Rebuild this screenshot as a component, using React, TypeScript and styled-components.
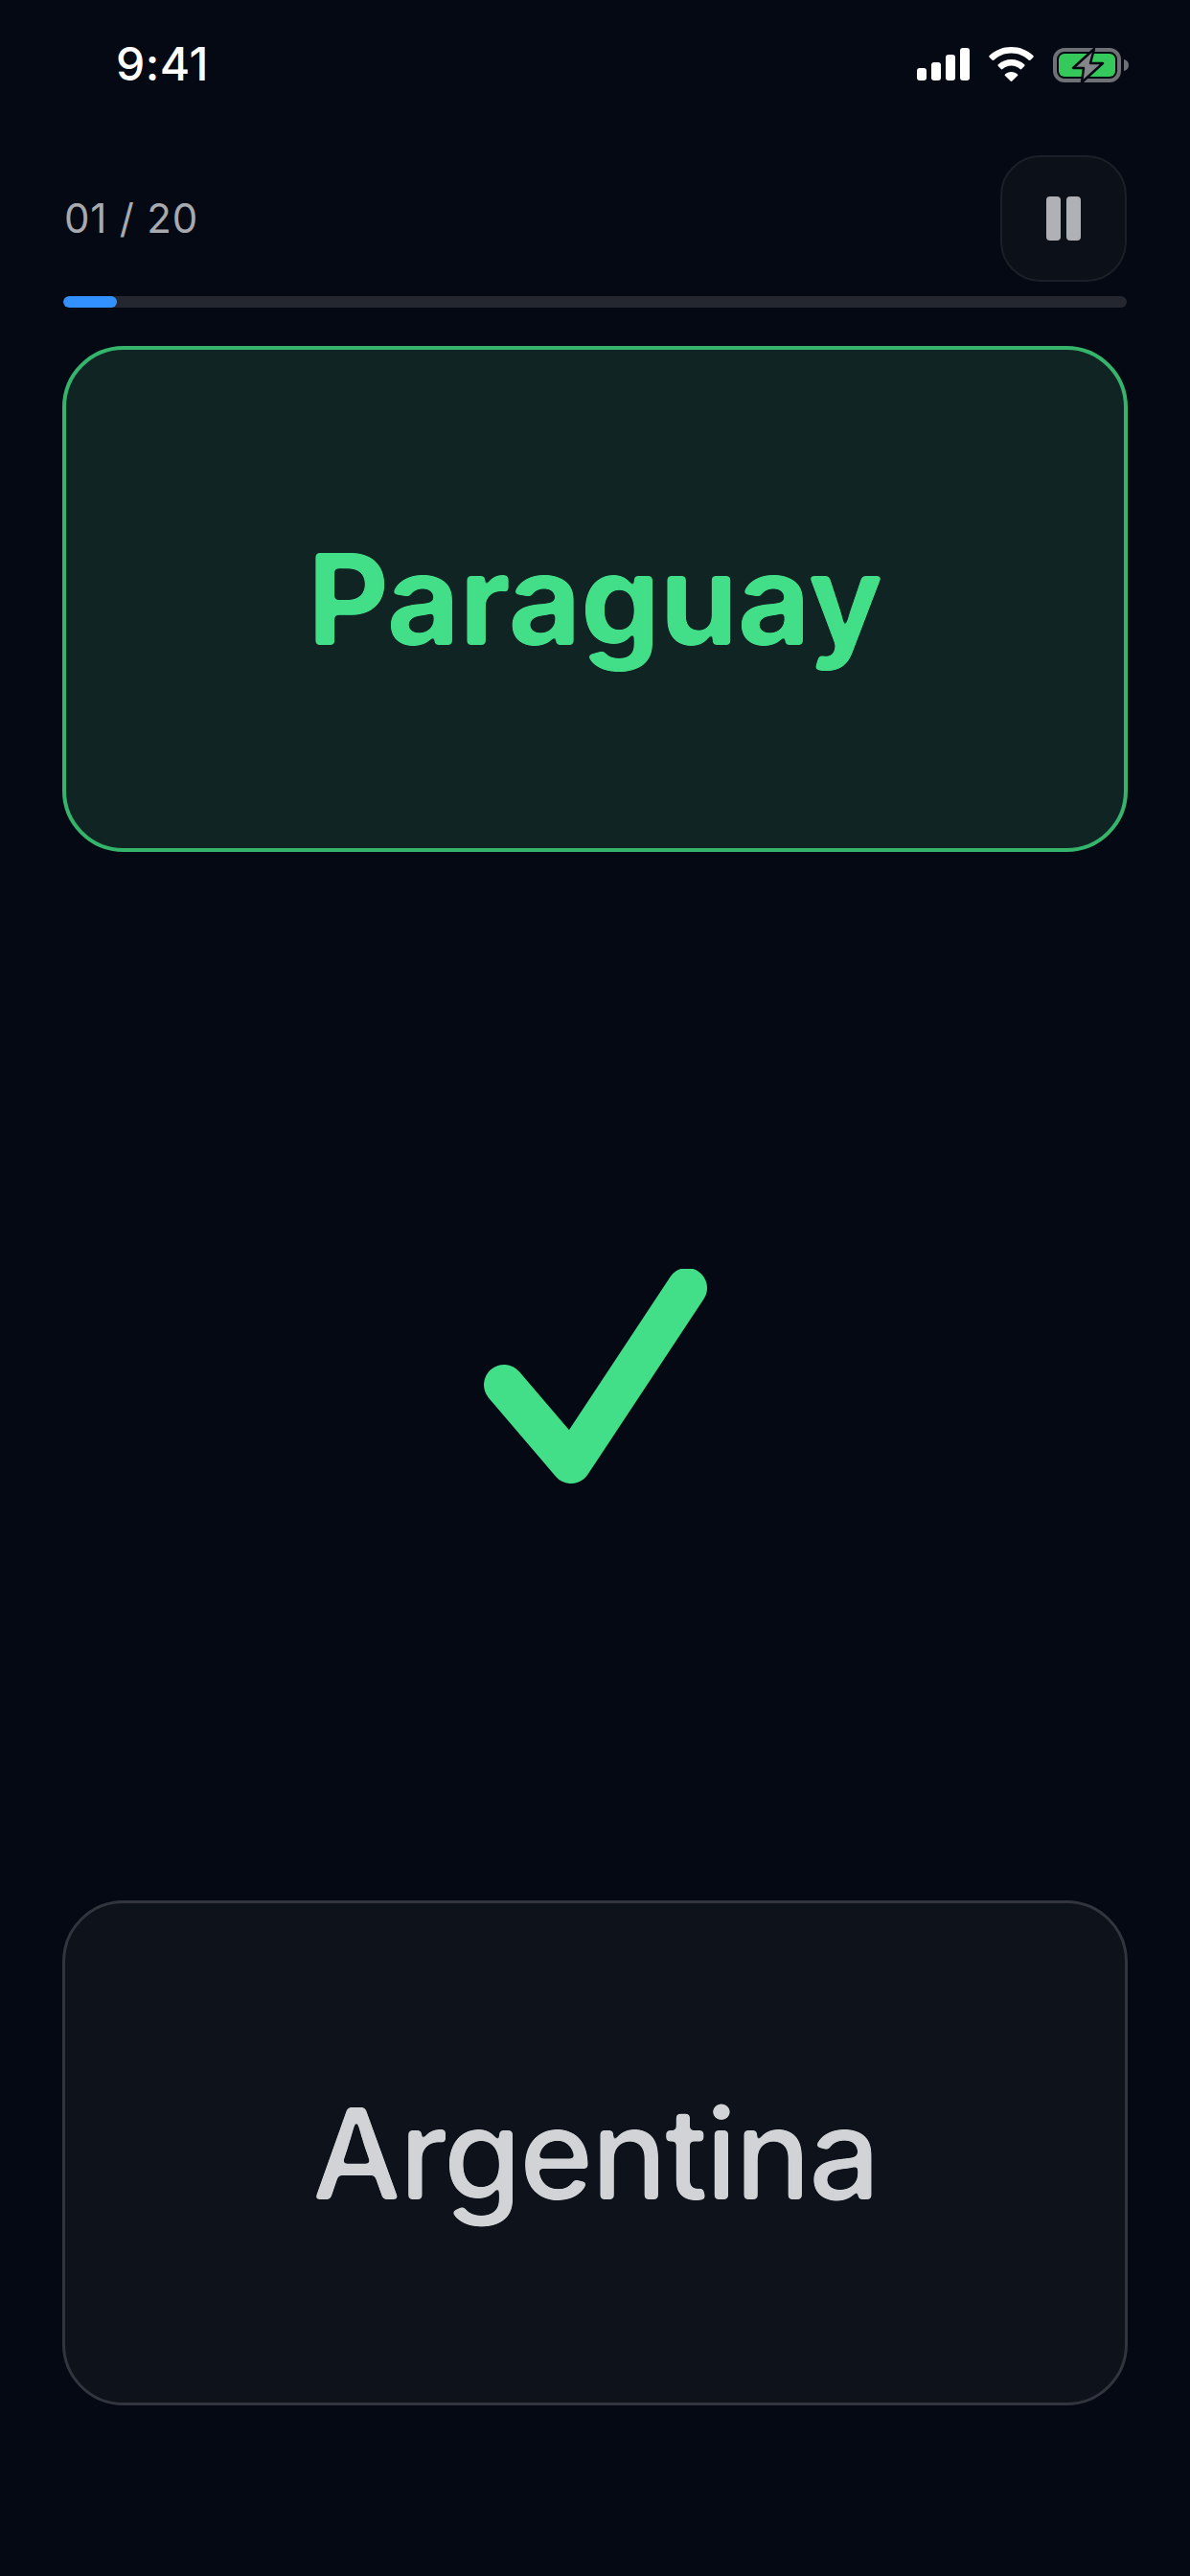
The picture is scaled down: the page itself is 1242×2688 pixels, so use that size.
import { FC } from "react";
import styled, { createGlobalStyle } from "styled-components";

const GlobalStyle = createGlobalStyle`
  html, body {
    margin: 0;
    padding: 0;
    background: #040913;
  }
`;

const Page = styled.div`
  width: 1242px;
  height: 2688px;
  box-sizing: border-box;
  padding: 0 66px 178px;
  display: flex;
  flex-direction: column;
  background: #040913;
  font-family: Inter, "Liberation Sans", sans-serif;
  overflow: hidden;
`;

// the reference font has rounded stroke ends, this blur + threshold filter softens the corners
const FilterDefs = styled.svg`
  position: absolute;
  width: 0;
  height: 0;
`;

const StatusBar = styled.div`
  height: 162px;
  flex-shrink: 0;
  box-sizing: border-box;
  padding: 43px 0 0 55px;
  display: flex;
  justify-content: space-between;
  align-items: flex-start;
`;

const Clock = styled.span`
  font-size: 48px;
  line-height: 48px;
  font-weight: 500;
  letter-spacing: 0.5px;
  color: #ffffff;
`;

const StatusIcons = styled.div`
  display: flex;
  align-items: flex-start;
  gap: 20px;
  margin-top: 6px;
  margin-right: -2px;
`;

const Header = styled.div`
  height: 132px;
  flex-shrink: 0;
  display: flex;
  align-items: center;
  justify-content: space-between;
`;

const Counter = styled.span`
  font-size: 42px;
  line-height: 50px;
  letter-spacing: 0.8px;
  color: #a8a9ae;
  padding-left: 1px;
`;

const PauseButton = styled.button`
  width: 132px;
  height: 132px;
  padding: 0;
  box-sizing: border-box;
  border: 2px solid #1c1f27;
  border-radius: 42px;
  background: #0c1018;
  display: flex;
  align-items: center;
  justify-content: center;
  gap: 6px;
`;

const PauseBar = styled.span`
  width: 15px;
  height: 46px;
  border-radius: 4px;
  background: #b0b1b6;
`;

const Track = styled.div`
  height: 12px;
  margin-top: 15px;
  flex-shrink: 0;
  border-radius: 6px;
  background: #24272f;
  overflow: hidden;
`;

const Fill = styled.div`
  height: 100%;
  border-radius: 6px;
  background: #3390ff;
`;

const AnswerCard = styled.div<{ $correct?: boolean }>`
  height: 527px;
  margin: 0 -1px;
  flex-shrink: 0;
  box-sizing: border-box;
  display: flex;
  align-items: center;
  justify-content: center;
  border-radius: 64px;
  border: ${(p) => (p.$correct ? "4px solid #35b56c" : "3px solid #32353e")};
  background: ${(p) => (p.$correct ? "#102423" : "#0d121b")};
`;

const AnswerText = styled.span<{ $correct?: boolean }>`
  color: ${(p) => (p.$correct ? "#42de88" : "#d1d3d6")};
  font-size: 132px;
  line-height: 160px;
  font-weight: ${(p) => (p.$correct ? 680 : 450)};
  letter-spacing: ${(p) => (p.$correct ? "-1px" : "-2.5px")};
  filter: url(#soften);
`;

const TopCard = styled(AnswerCard)`
  height: 528px;
  margin-top: 40px;
`;

const Middle = styled.div`
  flex: 1;
  display: flex;
  align-items: center;
  justify-content: center;
`;

const progress = 1 / 20;

const App: FC = () => {
  return (
    <Page>
      <GlobalStyle />
      <FilterDefs aria-hidden="true">
        <filter id="soften" x="-5%" y="-5%" width="110%" height="110%" colorInterpolationFilters="sRGB">
          <feGaussianBlur stdDeviation="2.2" />
          <feColorMatrix values="1 0 0 0 0  0 1 0 0 0  0 0 1 0 0  0 0 0 7 -3" />
        </filter>
      </FilterDefs>
      <StatusBar>
        <Clock>9:41</Clock>
        <StatusIcons>
          <svg width="55" height="36" viewBox="0 0 55 36" fill="#fff">
            <rect x="0" y="22" width="10" height="13" rx="3" />
            <rect x="15" y="16" width="10" height="19" rx="3" />
            <rect x="30" y="8" width="10" height="27" rx="3" />
            <rect x="45" y="1" width="10" height="34" rx="3" />
          </svg>
          <svg width="47" height="36" viewBox="0 0 47 36" fill="#fff">
            <path d="M23.5 0C14.6 0 6.600 3.400.6 9c-.5.5-.5 1.200 0 1.700l3 3c.5.5 1.200.5 1.700 0C10 9.300 16.400 6.500 23.500 6.500s13.500 2.800 18.200 7.200c.5.5 1.200.5 1.700 0l3-3c.5-.5.5-1.200 0-1.700C40.400 3.400 32.400 0 23.500 0z" />
            <path d="M23.500 13c-5.300 0-10.100 2-13.700 5.300-.5.5-.5 1.200 0 1.700l3 3c.5.5 1.200.5 1.700 0 2.400-2.100 5.500-3.400 9-3.400s6.600 1.300 9 3.400c.5.5 1.200.5 1.700 0l3-3c.5-.5.5-1.200 0-1.700C33.600 15 28.800 13 23.500 13z" />
            <path d="M23.500 26c-2.500 0-4.800.9-6.500 2.400-.5.5-.5 1.200 0 1.700l5.600 5.500c.5.5 1.300.5 1.800 0l5.600-5.500c.5-.5.5-1.200 0-1.700-1.700-1.500-4-2.400-6.500-2.400z" />
          </svg>
          <svg width="79" height="38" viewBox="0 0 79 38">
            <rect x="2" y="3" width="67" height="32" rx="10" fill="none" stroke="#6f7176" strokeWidth="4" />
            <rect x="6" y="7" width="59" height="24" rx="6" fill="#35c95c" />
            <path d="M74 13c3 .6 5 2.600 5 6s-2 5.400-5 6z" fill="#6f7176" />
            <path
              d="M43 2 21 22h11l-2 15 22-20H39z"
              fill="#85868a"
              stroke="#040913"
              strokeWidth="2.500"
              strokeLinejoin="round"
            />
          </svg>
        </StatusIcons>
      </StatusBar>

      <Header>
        <Counter>01 / 20</Counter>
        <PauseButton aria-label="Pause">
          <PauseBar />
          <PauseBar />
        </PauseButton>
      </Header>

      <Track>
        <Fill style={{ width: `${progress * 100}%` }} />
      </Track>

      <TopCard $correct>
        <AnswerText $correct>Paraguay</AnswerText>
      </TopCard>

      <Middle>
        <svg width="233" height="224" viewBox="0 0 233 224">
          <path
            d="M21 121 91 203 212 20"
            fill="none"
            stroke="#42de88"
            strokeWidth="42"
            strokeLinecap="round"
            strokeLinejoin="round"
          />
        </svg>
      </Middle>

      <AnswerCard>
        <AnswerText>Argentina</AnswerText>
      </AnswerCard>
    </Page>
  );
};

export default App;
